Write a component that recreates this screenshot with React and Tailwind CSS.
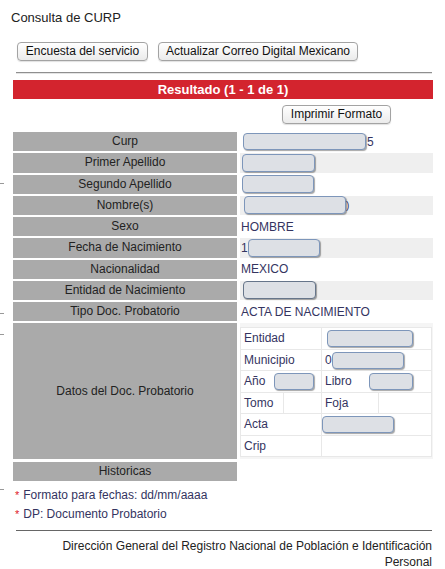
import React from "react";

const rows = [
  { label: "Curp", shade: false, value: "curp" },
  { label: "Primer Apellido", shade: true, value: "primer" },
  { label: "Segundo Apellido", shade: false, value: "segundo" },
  { label: "Nombre(s)", shade: true, value: "nombre" },
  { label: "Sexo", shade: false, value: "HOMBRE" },
  { label: "Fecha de Nacimiento", shade: true, value: "fecha" },
  { label: "Nacionalidad", shade: false, value: "MEXICO" },
  { label: "Entidad de Nacimiento", shade: true, value: "entidad" },
  { label: "Tipo Doc. Probatorio", shade: false, value: "ACTA DE NACIMIENTO" },
];

// blurred-out field, drawn as a soft rounded box
const Mask = ({ className = "" }) => (
  <span
    className={
      "inline-block align-middle rounded-[4px] border border-[#7d96ba] bg-[#dde0e5] shadow-[1px_1px_1px_rgba(0,0,0,0.35)] " +
      className
    }
  />
);

const Btn = ({ children, className = "" }) => (
  <button
    className={
      "h-[19px] px-0 whitespace-nowrap flex items-center justify-center rounded-[4px] border border-[#a3a3a3] bg-gradient-to-b from-white to-[#ebebeb] text-[12px] leading-[17px] text-[#111] shadow-[0_1px_1px_rgba(0,0,0,0.12)] " +
      className
    }
  >
    {children}
  </button>
);

const renderValue = (v) => {
  switch (v) {
    case "curp":
      return (
        <>
          <Mask className="w-[123px] h-[17px] ml-[2px]" />
          <span className="ml-[1px]">5</span>
        </>
      );
    case "primer":
      return <Mask className="w-[73px] h-[18px] ml-[1px] border-[#5d6f88]" />;
    case "segundo":
      return <Mask className="w-[72px] h-[18px] ml-[1px]" />;
    case "nombre":
      return (
        <>
          <Mask className="w-[102px] h-[18px] ml-[3px]" />
          <span className="text-[10px]">)</span>
        </>
      );
    case "fecha":
      return (
        <>
          <span>1</span>
          <Mask className="w-[72px] h-[18px] ml-[0px]" />
        </>
      );
    case "entidad":
      return <Mask className="w-[73px] h-[18px] ml-[2px] border-[#66758a]" />;
    default:
      return <span>{v}</span>;
  }
};

const cell = "border border-[#e8e8e8] px-[3px] h-[21.5px] leading-[19px] align-middle";

export default function App() {
  return (
    <div className="relative w-[445px] h-[569px] bg-white overflow-hidden font-['Liberation_Sans',Arial,sans-serif] text-[12px] text-[#222]">
      {/* stray marks at the page edge */}
      <div className="absolute left-0 top-[183px] w-[4px] h-px bg-[#999]" />
      <div className="absolute left-0 top-[313px] w-[4px] h-px bg-[#999]" />
      <div className="absolute left-0 top-[334px] w-[4px] h-px bg-[#999]" />
      <div className="absolute left-0 top-[489px] w-[4px] h-px bg-[#999]" />

      <div className="pt-[10px] pl-[11px] text-[13px] leading-[15px] text-[#222]">
        Consulta de CURP
      </div>

      <div className="flex gap-[10px] ml-[17px] mt-[17px]">
        <Btn className="w-[131px]">Encuesta del servicio</Btn>
        <Btn className="w-[200px]">Actualizar Correo Digital Mexicano</Btn>
      </div>

      <div className="ml-[16px] w-[416px] mt-[11px] border-t border-[#8f8f8f] h-[2px] bg-[#e4e4e4]" />

      <div className="ml-[13px] w-[420px] mt-[6px] h-[19px] bg-[#d3242e] text-white font-bold text-[13px] leading-[19px] text-center">
        Resultado (1 - 1 de 1)
      </div>

      <div className="ml-[282px] mt-[6px]">
        <Btn className="w-[109px]">Imprimir Formato</Btn>
      </div>

      <div className="ml-[13px] w-[420px] mt-[8px] flex flex-col gap-[2px]">
        {rows.map((r) => (
          <div key={r.label} className="flex gap-[3px] h-[19.25px]">
            <div className="w-[224px] bg-[#aaaaaa] text-center leading-[19px] text-[#222]">
              {r.label}
            </div>
            <div
              className={
                "flex-1 flex items-center pl-[1px] whitespace-nowrap text-[#34345f] " +
                (r.shade ? "bg-[#efefef]" : "bg-white")
              }
            >
              {renderValue(r.value)}
            </div>
          </div>
        ))}

        <div className="flex gap-[3px] h-[136px]">
          <div className="w-[224px] bg-[#aaaaaa] flex items-center justify-center text-[#222]">
            Datos del Doc. Probatorio
          </div>
          <div className="flex-1 bg-[#f5f5f5] pt-[4px] pb-[3px] pr-[1px] pl-0 overflow-hidden">
            <table className="w-full border-collapse bg-white text-[#34345f] table-fixed">
              <colgroup>
                <col className="w-[43px]" />
                <col className="w-[38px]" />
                <col className="w-[57px]" />
                <col />
              </colgroup>
              <tbody>
                <tr>
                  <td colSpan={2} className={cell}>Entidad</td>
                  <td colSpan={2} className={cell + " whitespace-nowrap"}>
                    <Mask className="w-[86px] h-[17px] ml-[2px]" />
                  </td>
                </tr>
                <tr>
                  <td colSpan={2} className={cell}>Municipio</td>
                  <td colSpan={2} className={cell + " whitespace-nowrap"}>
                    <span>0</span>
                    <Mask className="w-[72px] h-[17px]" />
                  </td>
                </tr>
                <tr>
                  <td colSpan={2} className={cell + " whitespace-nowrap"}>
                    <span>Año</span>
                    <Mask className="w-[40px] h-[17px] ml-[9px]" />
                  </td>
                  <td colSpan={2} className={cell + " whitespace-nowrap"}>
                    <span>Libro</span>
                    <Mask className="w-[44px] h-[17px] ml-[17px]" />
                  </td>
                </tr>
                <tr>
                  <td className={cell}>Tomo</td>
                  <td className={cell}></td>
                  <td className={cell}>Foja</td>
                  <td className={cell}></td>
                </tr>
                <tr>
                  <td colSpan={2} className={cell}>Acta</td>
                  <td colSpan={2} className={cell + " whitespace-nowrap !pl-0"}>
                    <Mask className="w-[72px] h-[17px]" />
                  </td>
                </tr>
                <tr>
                  <td colSpan={2} className={cell}>Crip</td>
                  <td colSpan={2} className={cell}></td>
                </tr>
              </tbody>
            </table>
          </div>
        </div>

        <div className="flex gap-[3px] h-[19px] mt-px">
          <div className="w-[224px] bg-[#aaaaaa] text-center leading-[19px] text-[#222]">
            Historicas
          </div>
          <div className="flex-1" />
        </div>
      </div>

      <div className="ml-[15px] mt-[5px] text-[#34345f] leading-[19px]">
        <div>
          <span className="text-[#e0202a] text-[11px] align-top mr-[4px]">*</span>
          Formato para fechas: dd/mm/aaaa
        </div>
        <div>
          <span className="text-[#e0202a] text-[11px] align-top mr-[4px]">*</span>
          DP: Documento Probatorio
        </div>
      </div>

      <div className="ml-[16px] w-[416px] mt-[6px] border-t border-[#666]" />

      <div className="w-[432px] mt-[7px] text-right leading-[16px] text-[#222]">
        Dirección General del Registro Nacional de Población e Identificación
        <br />
        Personal
      </div>
    </div>
  );
}
